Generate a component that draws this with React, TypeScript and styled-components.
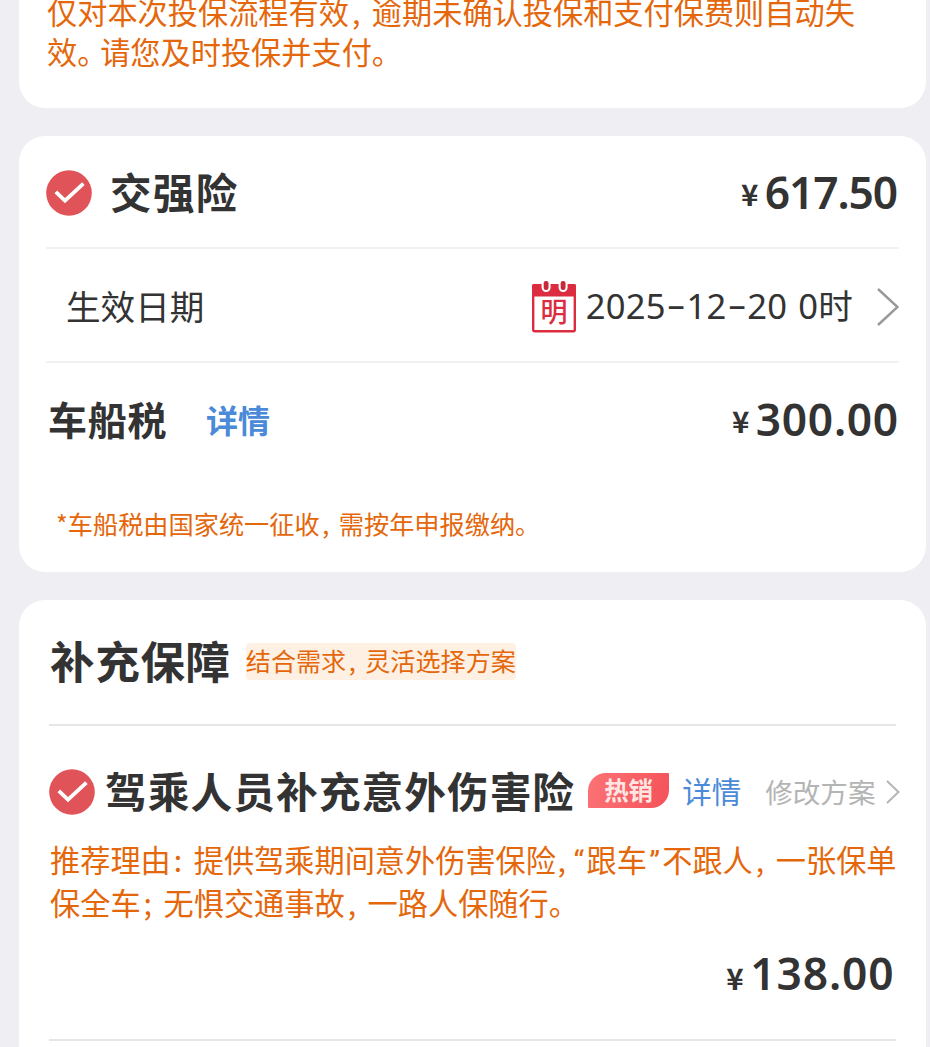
import React from 'react';
import styled, { createGlobalStyle } from 'styled-components';

const GlobalStyle = createGlobalStyle`
  * { box-sizing: border-box; }
  html, body { margin: 0; background: #eeeef3; }
  body {
    height: 1047px;
    overflow: hidden;
    font-family: "Noto Sans CJK SC", sans-serif;
    color: #333;
  }
`;

const Page = styled.main`
  width: 930px;
  height: 1047px;
  overflow: hidden;
  padding: 0 4px 0 19px;
  display: flex;
  flex-direction: column;
  gap: 28.4px;
`;

const Card = styled.section<{ $height: number; $inset: number; $flatTop?: boolean }>`
  flex: none;
  height: ${p => p.$height}px;
  padding: 0 ${p => p.$inset}px 0 ${p => p.$inset}px;
  background: #fff;
  border-radius: ${p => (p.$flatTop ? '0 0 26px 26px' : '26px')};
`;

const Row = styled.div<{ $height: number; $line?: string; $top?: number }>`
  display: flex;
  align-items: center;
  height: ${p => p.$height}px;
  padding-top: ${p => p.$top ?? 0}px;
  white-space: nowrap;
  border-bottom: ${p => (p.$line ? `2px solid ${p.$line}` : 'none')};
`;

const Paragraph = styled.p<{ $size: number; $line: number }>`
  margin: 0;
  font-size: ${p => p.$size}px;
  line-height: ${p => p.$line}px;
  color: #e4670c;
  white-space: nowrap;
`;

const Mark = styled.span<{ $w: number; $shift?: number }>`
  display: inline-block;
  width: ${p => p.$w}em;
  text-indent: ${p => p.$shift ?? 0}em;
  font-feature-settings: "halt";
`;

const Quote = styled.span`
  display: inline-block;
  width: 0.51em;
  font-family: Roboto, sans-serif;
  text-align: center;
  line-height: 1;
`;

const Title = styled.h2<{ $size: number; $gap: number; $left: number; $up: number }>`
  margin: 0 0 ${p => p.$up * 2}px ${p => p.$left}px;
  font-size: ${p => p.$size}px;
  line-height: 60px;
  letter-spacing: ${p => p.$gap}px;
  font-weight: 700;
`;

const Label = styled.span`
  margin: 0 0 4px 20px;
  font-size: 34.6px;
  line-height: 50px;
`;

const Link = styled.a<{ $size: number; $left: number; $up: number; $bold?: boolean }>`
  margin: 0 0 ${p => p.$up * 2}px ${p => p.$left}px;
  font-size: ${p => p.$size}px;
  font-weight: ${p => (p.$bold ? 700 : 400)};
  line-height: 46px;
  color: #4a8ad8;
`;

const Right = styled.div`
  margin-left: auto;
  display: flex;
  align-items: center;
`;

const PriceBox = styled.div<{ $pad: number; $up: number }>`
  margin: 0 0 ${p => p.$up * 2}px auto;
  padding-right: ${p => p.$pad}px;
  display: flex;
  align-items: baseline;
`;

const Yen = styled.span<{ $lift: number }>`
  font-size: 29.5px;
  font-weight: 700;
  line-height: 50px;
  margin-right: 6.5px;
  position: relative;
  top: ${p => -p.$lift}px;
`;

const Amount = styled.span<{ $gap: number }>`
  font-family: "Noto Sans", sans-serif;
  font-size: 44.3px;
  font-weight: 650;
  line-height: 54px;
  letter-spacing: ${p => p.$gap}px;
  margin-right: ${p => -p.$gap + 0.8}px;
`;

const DateText = styled.span`
  margin: 0 0 1px 9.5px;
  font-family: "Noto Sans", "Noto Sans CJK SC", sans-serif;
  font-size: 34.6px;
  line-height: 50px;
  letter-spacing: 0.15px;
  word-spacing: 2px;
`;

const Dash = styled.span`
  position: relative;
  top: -2px;
  margin: 0 1.5px 0 2px;
`;

const Tag = styled.span`
  margin-left: 15px;
  height: 37px;
  line-height: 35px;
  border-radius: 4px;
  background: #fef1e4;
  color: #e4670c;
  font-size: 25.1px;
`;

const HotTag = styled.span`
  flex: none;
  margin: 0 0 2px 13px;
  width: 81px;
  height: 35px;
  border-radius: 18px 1px 18px 1px;
  background: linear-gradient(100deg, #fb7275, #f4535a);
  color: #ffe6e3;
  font-size: 24.5px;
  font-weight: 700;
  line-height: 33px;
  text-align: center;
`;

const Modify = styled.span`
  margin: 0 0 2px 24px;
  font-size: 27.6px;
  line-height: 40px;
  color: #b4b4b4;
`;

const Icon = styled.svg<{ $left?: number }>`
  flex: none;
  display: block;
  margin-left: ${p => p.$left ?? 0}px;
`;

const Check = () => (
  <Icon width="46" height="46" viewBox="0 0 46 46">
    <circle cx="23" cy="23" r="22.8" fill="#e05358" />
    <path d="M9.8 21.8 L19 30.6 L37.4 13.6" fill="none" stroke="#fff" strokeWidth="3.8" />
  </Icon>
);

const Calendar = () => (
  <Icon width="44" height="52" viewBox="0 0 44 52">
    <rect x="1.2" y="4.2" width="41.6" height="46" rx="1.5" fill="#fff" stroke="#dc2d40" strokeWidth="2.4" />
    <path d="M0 4.5 a1.5 1.5 0 0 1 1.5 -1.5 H42.5 a1.5 1.5 0 0 1 1.5 1.5 V15.5 H0 Z" fill="#dc2d40" />
    <rect x="9.6" y="-2" width="9" height="13" rx="4.5" fill="#fff" />
    <rect x="26.6" y="-2" width="9" height="13" rx="4.5" fill="#fff" />
    <rect x="11.7" y="0" width="4.8" height="9" rx="2.2" fill="#c9283b" />
    <rect x="28.7" y="0" width="4.8" height="9" rx="2.2" fill="#c9283b" />
    <text x="22" y="41" textAnchor="middle" fontSize="27" fontWeight="500" fill="#dc2d40">明</text>
  </Icon>
);

const Arrow = ({ w, h, left, color, stroke }: { w: number; h: number; left: number; color: string; stroke: number }) => (
  <Icon $left={left} width={w} height={h} viewBox={`0 0 ${w} ${h}`}>
    <path d={`M1 1 L${w - 1.5} ${h / 2} L1 ${h - 1}`} fill="none" stroke={color} strokeWidth={stroke} />
  </Icon>
);

const Price = ({ value, gap, up, lift, pad = 0 }: { value: string; gap: number; up: number; lift: number; pad?: number }) => (
  <PriceBox $pad={pad} $up={up}>
    <Yen $lift={lift}>¥</Yen>
    <Amount $gap={gap}>{value}</Amount>
  </PriceBox>
);

const Notice = styled(Paragraph)`
  margin: -9.5px 0 0 1px;
`;

const TaxNote = styled(Paragraph)`
  padding: 24.5px 0 0 10px;
`;

const Reason = styled(Paragraph)`
  margin-top: -20px;
  padding-left: 1px;
`;

export default function App() {
  return (
    <>
      <GlobalStyle />
      <Page>
        <Card $height={108} $inset={27} $flatTop>
          <Notice $size={30.2} $line={40}>
            仅对本次投保流程有效<Mark $w={0.76} $shift={0.1}>,</Mark>逾期未确认投保和支付保费则自动失<br />
            效<Mark $w={0.76}>。</Mark>请您及时投保并支付<Mark $w={0.76}>。</Mark>
          </Notice>
        </Card>

        <Card $height={435.2} $inset={27}>
          <Row $height={113} $line="#f1f1f2" $top={3}>
            <Check />
            <Title $size={41.5} $gap={1.4} $left={18} $up={2.4}>交强险</Title>
            <Price value="617.50" gap={-1.1} up={0.5} lift={3} />
          </Row>
          <Row $height={114} $line="#f1f1f2" $top={3}>
            <Label>生效日期</Label>
            <Right>
              <Calendar />
              <DateText>2025<Dash>–</Dash>12<Dash>–</Dash>20 0时</DateText>
              <Arrow left={24} w={22} h={38} color="#999" stroke={2.4} />
            </Right>
          </Row>
          <Row $height={115}>
            <Title $size={39} $gap={0.8} $left={2} $up={2.4}>车船税</Title>
            <Link $size={32} $left={38.5} $up={2} $bold>详情</Link>
            <Price value="300.00" gap={0.7} up={1} lift={3} />
          </Row>
          <TaxNote $size={25.2} $line={40}>
            *车船税由国家统一征收<Mark $w={0.76} $shift={0.1}>,</Mark>需按年申报缴纳<Mark $w={0.76}>。</Mark>
          </TaxNote>
        </Card>

        <Card $height={480} $inset={30}>
          <Row $height={126} $line="#e6e6e8">
            <Title $size={44.5} $gap={0.7} $left={1} $up={2}>补充保障</Title>
            <Tag>结合需求<Mark $w={0.76} $shift={0.1}>,</Mark>灵活选择方案</Tag>
          </Row>
          <Row $height={132}>
            <Check />
            <Title $size={41.7} $gap={1.05} $left={10} $up={2.2}>驾乘人员补充意外伤害险</Title>
            <HotTag>热销</HotTag>
            <Link $size={29.5} $left={13} $up={1.5}>详情</Link>
            <Modify>修改方案</Modify>
            <Arrow left={10} w={14} h={24} color="#b4b4b4" stroke={2} />
          </Row>
          <Reason $size={30.2} $line={43}>
            推荐理由<Mark $w={0.76} $shift={0.1}>:</Mark>提供驾乘期间意外伤害保险<Mark $w={0.5} $shift={0.05}>,</Mark><Quote>“</Quote>跟车<Quote>”</Quote>不跟人<Mark $w={0.76} $shift={0.1}>,</Mark>一张保单<br />
            保全车<Mark $w={0.76} $shift={0.1}>;</Mark>无惧交通事故<Mark $w={0.76} $shift={0.1}>,</Mark>一路人保随行<Mark $w={0.76}>。</Mark>
          </Reason>
          <Row $height={117} $line="#e6e6e8">
            <Price value="138.00" gap={0.9} up={7.5} lift={0} pad={1.5} />
          </Row>
        </Card>
      </Page>
    </>
  );
}
